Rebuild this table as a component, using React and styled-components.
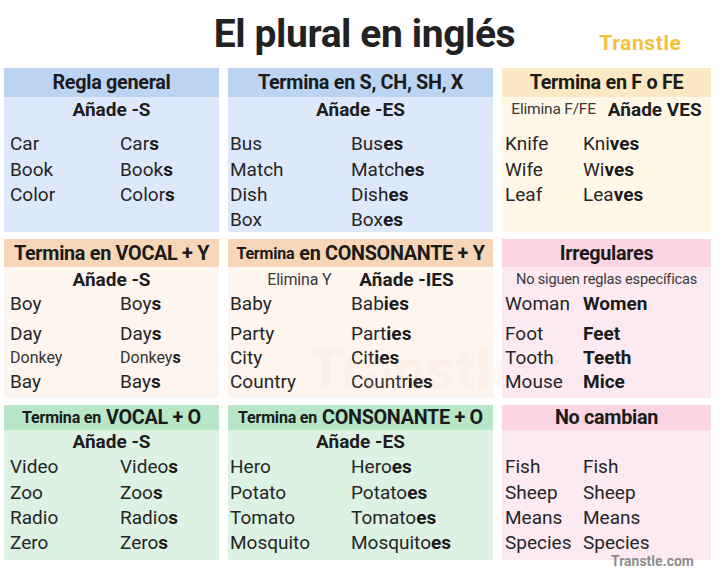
import React from "react";
import styled, { createGlobalStyle } from "styled-components";

const Global = createGlobalStyle`
  html, body { margin: 0; padding: 0; background: #ffffff; }
  body { font-family: Roboto, "Noto Sans", "Liberation Sans", sans-serif; color: #222; }
`;

const TONES = {
  blue: { head: "#bcd4f2", body: "#dde9fa" },
  yellow: { head: "#fce8c2", body: "#fff8e7" },
  peach: { head: "#f6d6b6", body: "#fff5ef" },
  pink: { head: "#fcd5e5", body: "#fde9f2" },
  green: { head: "#b8e7c8", body: "#dcf3e3" },
};

const Page = styled.div`
  width: 720px;
  height: 580px;
  box-sizing: border-box;
  padding: 0 9px 0 4px;
  display: flex;
  flex-direction: column;
`;

const TopBar = styled.header`
  height: 68px;
  display: grid;
  grid-template-columns: 1fr auto 1fr;
  align-items: center;
`;

const Title = styled.h1`
  grid-column: 2;
  margin: 3px 0 0 14px;
  font-size: 39px;
  font-weight: 700;
  letter-spacing: -0.4px;
  line-height: 1;
  color: #222;
  padding-bottom: 2px;
`;

const Logo = styled.div`
  grid-column: 3;
  justify-self: start;
  margin-left: 84px;
  margin-top: 18px;
  font-size: 21px;
  font-weight: 700;
  color: #f3c13a;
  letter-spacing: 0.6px;
`;

const Board = styled.main`
  display: grid;
  grid-template-columns: 215px 265px 209px;
  grid-template-rows: 164px 159px 155px;
  column-gap: 9px;
  row-gap: 7px;
`;

const Card = styled.section`
  position: relative;
  overflow: visible;
  background: ${(p) => TONES[p.$tone].body};
  display: flex;
  flex-direction: column;
`;

const Head = styled.div`
  height: ${(p) => p.$h}px;
  background: ${(p) => TONES[p.$tone].head};
  display: flex;
  align-items: center;
  justify-content: center;
  font-size: 19.8px;
  font-weight: 700;
  letter-spacing: -0.3px;
  color: #1b1b1b;
  white-space: nowrap;
  gap: 5px;
`;

const HeadSmall = styled.span`
  font-size: 16px;
  letter-spacing: -0.2px;
`;

const Sub = styled.div`
  height: ${(p) => p.$h}px;
  display: flex;
  align-items: center;
  justify-content: center;
  gap: ${(p) => p.$gap}px;
  white-space: nowrap;
`;

const SubBold = styled.span`
  font-size: 19px;
  font-weight: 700;
  color: #1d1d1d;
`;

const SubNote = styled.span`
  font-size: ${(p) => p.$size}px;
  color: #3a3a3a;
  letter-spacing: -0.2px;
`;

const Words = styled.div`
  padding-top: ${(p) => p.$lead}px;
  padding-left: ${(p) => p.$pad}px;
  display: flex;
  flex-direction: column;
`;

const WordRow = styled.div`
  display: grid;
  grid-template-columns: ${(p) => p.$col}px 1fr;
  height: ${(p) => p.$lh}px;
  align-items: center;
  font-size: ${(p) => (p.$small ? 16 : 19)}px;
  font-weight: 400;
  color: ${(p) => (p.$small ? "#333" : "#262626")};
  white-space: nowrap;
  &:first-child { margin-bottom: ${(p) => p.$firstGap}px; }
`;

const Suffix = styled.b`
  font-weight: 700;
  color: #1a1a1a;
`;

const Site = styled.div`
  position: absolute;
  right: 17px;
  bottom: -9px;
  font-size: 14px;
  font-weight: 700;
  color: #8d8d8d;
`;

const Watermark = styled.div`
  position: absolute;
  left: 80px;
  top: 96px;
  font-size: 58px;
  font-weight: 700;
  color: rgba(236, 196, 150, 0.09);
  pointer-events: none;
  z-index: 0;
`;

const ROW = {
  1: { head: 29, sub: 24, lead: 10, lh: 25, firstGap: 1 },
  2: { head: 28, sub: 24, lead: 0, lh: 24, firstGap: 6 },
  3: { head: 25, sub: 23, lead: 1, lh: 25, firstGap: 1 },
};

const COL = {
  1: { pad: 6, col: 110 },
  2: { pad: 2, col: 121 },
  3: { pad: 3, col: 78 },
};

const cards = [
  {
    tone: "blue", row: 1, colIdx: 1,
    head: <>Regla general</>,
    sub: { items: [{ bold: "Añade -S" }] },
    words: [["Car", "Car", "s"], ["Book", "Book", "s"], ["Color", "Color", "s"]],
  },
  {
    tone: "blue", row: 1, colIdx: 2,
    head: <>Termina en S, CH, SH, X</>,
    sub: { items: [{ bold: "Añade -ES" }] },
    words: [["Bus", "Bus", "es"], ["Match", "Match", "es"], ["Dish", "Dish", "es"], ["Box", "Box", "es"]],
  },
  {
    tone: "yellow", row: 1, colIdx: 3,
    head: <>Termina en F o FE</>,
    sub: { gap: 12, items: [{ note: "Elimina F/FE", size: 15.5 }, { bold: "Añade VES" }] },
    words: [["Knife", "Kni", "ves"], ["Wife", "Wi", "ves"], ["Leaf", "Lea", "ves"]],
  },
  {
    tone: "peach", row: 2, colIdx: 1,
    head: <>Termina en VOCAL + Y</>,
    sub: { items: [{ bold: "Añade -S" }] },
    words: [["Boy", "Boy", "s"], ["Day", "Day", "s"], ["Donkey", "Donkey", "s", true], ["Bay", "Bay", "s"]],
  },
  {
    tone: "peach", row: 2, colIdx: 2, watermark: true,
    head: <><HeadSmall>Termina</HeadSmall>en CONSONANTE + Y</>,
    sub: { gap: 28, items: [{ note: "Elimina Y", size: 16 }, { bold: "Añade -IES" }] },
    words: [["Baby", "Bab", "ies"], ["Party", "Part", "ies"], ["City", "Cit", "ies"], ["Country", "Countr", "ies"]],
  },
  {
    tone: "pink", row: 2, colIdx: 3,
    head: <>Irregulares</>,
    sub: { items: [{ note: "No siguen reglas específicas", size: 14.6 }] },
    words: [["Woman", "", "Women"], ["Foot", "", "Feet"], ["Tooth", "", "Teeth"], ["Mouse", "", "Mice"]],
  },
  {
    tone: "green", row: 3, colIdx: 1,
    head: <><HeadSmall>Termina en</HeadSmall>VOCAL + O</>,
    sub: { items: [{ bold: "Añade -S" }] },
    words: [["Video", "Video", "s"], ["Zoo", "Zoo", "s"], ["Radio", "Radio", "s"], ["Zero", "Zero", "s"]],
  },
  {
    tone: "green", row: 3, colIdx: 2,
    head: <><HeadSmall>Termina en</HeadSmall>CONSONANTE + O</>,
    sub: { items: [{ bold: "Añade -ES" }] },
    words: [["Hero", "Hero", "es"], ["Potato", "Potato", "es"], ["Tomato", "Tomato", "es"], ["Mosquito", "Mosquito", "es"]],
  },
  {
    tone: "pink", row: 3, colIdx: 3, site: true,
    head: <>No cambian</>,
    sub: { items: [] },
    words: [["Fish", "Fish", ""], ["Sheep", "Sheep", ""], ["Means", "Means", ""], ["Species", "Species", ""]],
  },
];

function RuleCard({ c }) {
  const r = ROW[c.row];
  const col = COL[c.colIdx];
  return (
    <Card $tone={c.tone}>
      {c.watermark && <Watermark aria-hidden="true">Transtle</Watermark>}
      <Head $tone={c.tone} $h={r.head}>{c.head}</Head>
      <Sub $h={r.sub} $gap={c.sub.gap || 0}>
        {c.sub.items.map((it, i) =>
          it.bold ? (
            <SubBold key={i}>{it.bold}</SubBold>
          ) : (
            <SubNote key={i} $size={it.size}>{it.note}</SubNote>
          )
        )}
      </Sub>
      <Words $lead={r.lead} $pad={col.pad}>
        {c.words.map(([s, base, suf, small]) => (
          <WordRow key={s} $col={col.col} $lh={r.lh} $firstGap={r.firstGap} $small={small}>
            <span>{s}</span>
            <span>
              {base}
              {suf && <Suffix>{suf}</Suffix>}
            </span>
          </WordRow>
        ))}
      </Words>
      {c.site && <Site>Transtle.com</Site>}
    </Card>
  );
}

export default function App() {
  return (
    <>
      <Global />
      <Page>
        <TopBar>
          <Title>El plural en inglés</Title>
          <Logo>Transtle</Logo>
        </TopBar>
        <Board>
          {cards.map((c, i) => (
            <RuleCard key={i} c={c} />
          ))}
        </Board>
      </Page>
    </>
  );
}
